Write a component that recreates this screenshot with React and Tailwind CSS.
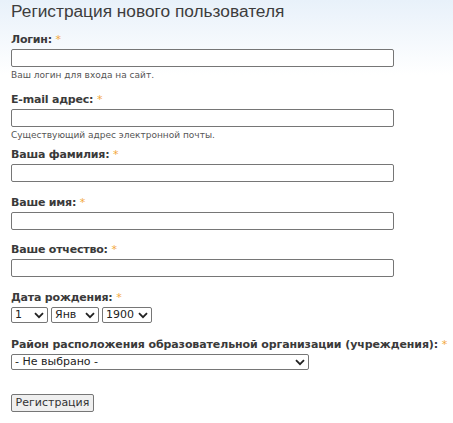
function Req() {
  return <span className="text-[#f3a73c] font-normal">*</span>;
}

function Label({ children, tight = "tracking-[-0.2px]" }) {
  return (
    <label className={`block whitespace-nowrap text-[11px] leading-[14px] font-bold text-[#3a3a3a] ${tight}`}>
      {children}: <Req />
    </label>
  );
}

function Field({ label, hint, className = "" }) {
  return (
    <div className={className}>
      <Label>{label}</Label>
      <input
        type="text"
        className="block mt-[2px] w-[383px] h-[18px] border border-[#767676] rounded-[2px] bg-white px-1 text-[11px]"
      />
      {hint && (
        <div className="mt-[2px] text-[9px] leading-[12px] text-[#555]">{hint}</div>
      )}
    </div>
  );
}

function Select({ value, width }) {
  return (
    <span className="relative block" style={{ width }}>
      <select
        defaultValue={value}
        className="block w-full h-[16px] appearance-none border border-[#767676] rounded-[2px] bg-white pl-[3px] text-[11px] leading-[14px] text-[#222]"
      >
        <option>{value}</option>
      </select>
      <svg
        className="pointer-events-none absolute right-[4px] top-[5px]"
        width="10"
        height="7"
        viewBox="0 0 10 7"
        fill="none"
        stroke="#222"
        strokeWidth="1.8"
      >
        <path d="M1 1.2 L5 5.2 L9 1.2" />
      </svg>
    </span>
  );
}

export default function App() {
  return (
    <div className="min-h-[423px] bg-[linear-gradient(to_bottom,#e8f1fa,#ffffff_75px)] pl-[11px] font-['DejaVu_Sans',Verdana,sans-serif]">
      <h1 className="text-[17.3px] leading-[22px] font-normal text-[#3d3d3d] font-['Liberation_Sans',Arial,sans-serif]">
        Регистрация нового пользователя
      </h1>

      <Field label="Логин" hint="Ваш логин для входа на сайт." className="mt-[11px]" />
      <Field label="E-mail адрес" hint="Существующий адрес электронной почты." className="mt-[12px]" />
      <Field label="Ваша фамилия" className="mt-[7px]" />
      <Field label="Ваше имя" className="mt-[14px]" />
      <Field label="Ваше отчество" className="mt-[13px]" />

      <div className="mt-[14px]">
        <Label>Дата рождения</Label>
        <div className="mt-[2px] flex gap-[3px]">
          <Select value="1" width={37} />
          <Select value="Янв" width={48} />
          <Select value="1900" width={50} />
        </div>
      </div>

      <div className="mt-[15px]">
        <Label tight="tracking-[-0.1px]">Район расположения образовательной организации (учреждения)</Label>
        <div className="mt-[2px] flex">
          <Select value="- Не выбрано -" width={298} />
        </div>
      </div>

      <div className="mt-[24px] flex">
        <button className="h-[18px] w-[83px] border border-[#767676] rounded-[2px] bg-[#efefef] text-[11px] leading-[14px] text-[#333]">
          Регистрация
        </button>
      </div>
    </div>
  );
}
